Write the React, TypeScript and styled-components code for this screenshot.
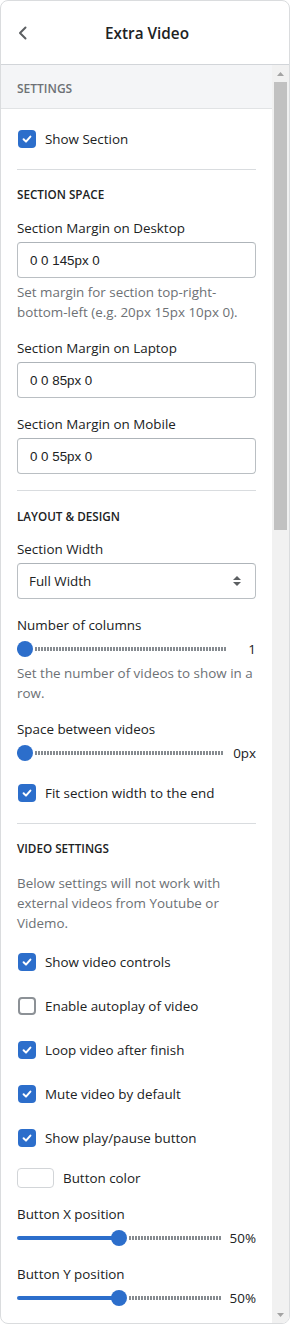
import React from 'react';
import styled, { createGlobalStyle } from 'styled-components';

const GlobalStyle = createGlobalStyle`
  html, body { margin: 0; padding: 0; background: #ffffff; }
  body { font-family: "Open Sans", "Noto Sans", sans-serif; color: #202223; }
  * { box-sizing: border-box; }
`;

const TEXT = '13.4px';

const Card = styled.div`
  width: 290px;
  height: 1324px;
  border: 1px solid #dadcde;
  border-radius: 8px;
  overflow: hidden;
  display: flex;
  flex-direction: column;
  background: #ffffff;
`;

const Header = styled.header`
  flex: none;
  height: 64px;
  border-bottom: 1px solid #d2d5d9;
  display: grid;
  grid-template-columns: 44px 1fr 40px;
  align-items: center;
`;

const BackButton = styled.button`
  border: 0;
  background: transparent;
  padding: 0;
  width: 44px;
  height: 44px;
  display: flex;
  align-items: center;
  justify-content: center;
  color: #5c5f62;
`;

const Title = styled.h1`
  margin: 0;
  text-align: center;
  font-size: 15.3px;
  font-weight: 600;
  line-height: 20px;
  color: #202223;
`;

const Body = styled.div`
  flex: 1;
  min-height: 0;
  display: flex;
`;

const Content = styled.div`
  width: 271px;
  flex: none;
  overflow: hidden;
`;

const Band = styled.div`
  height: 44px;
  padding: 3px 16px 0;
  display: flex;
  align-items: center;
  background: #f4f5f7;
  border-bottom: 1px solid #e1e3e5;
  font-size: 12px;
  font-weight: 600;
  color: #6d7175;
  text-transform: uppercase;
`;

const Section = styled.section<{ $pt: number; $pb: number; $last?: boolean }>`
  margin: 0 16px;
  padding: ${(p) => p.$pt}px 0 ${(p) => p.$pb}px;
  border-bottom: ${(p) => (p.$last ? 'none' : '1px solid #d9dcdf')};
  display: flex;
  flex-direction: column;
`;

const Heading = styled.h2`
  margin: 0;
  font-size: 11.7px;
  line-height: 16px;
  font-weight: 600;
  text-transform: uppercase;
  color: #202223;
`;

const Field = styled.div<{ $mt?: number }>`
  margin-top: ${(p) => p.$mt ?? 0}px;
  display: flex;
  flex-direction: column;
  gap: 4px;
`;

const Label = styled.label`
  font-size: ${TEXT};
  line-height: 20px;
  color: #202223;
`;

const Help = styled.p<{ $mt?: number }>`
  margin: ${(p) => p.$mt ?? 0}px 0 0;
  font-size: ${TEXT};
  line-height: 20px;
  color: #6d7175;
`;

const TextInput = styled.input`
  height: 36px;
  width: 100%;
  border: 1px solid #babfc3;
  border-top-color: #aeb4b9;
  border-radius: 4px;
  padding: 0 12px;
  font-family: "Liberation Sans", Arial, sans-serif;
  font-size: 13.333px;
  color: #202223;
  background: #ffffff;
  outline: none;
`;

const SelectBox = styled.div`
  height: 36px;
  border: 1px solid #babfc3;
  border-top-color: #aeb4b9;
  border-radius: 4px;
  padding: 0 12px 0 11px;
  display: flex;
  align-items: center;
  justify-content: space-between;
  font-size: ${TEXT};
  color: #202223;
`;

const SliderRow = styled.div`
  height: 20px;
  display: flex;
  align-items: center;
  gap: 9px;
`;

const Track = styled.div`
  position: relative;
  flex: 1;
  height: 20px;
`;

const Dotted = styled.div`
  position: absolute;
  right: 0;
  top: 8px;
  height: 4px;
  background: repeating-linear-gradient(to right, #868b90 0 2px, transparent 2px 3px);
`;

const Filled = styled.div`
  position: absolute;
  left: 0;
  top: 8px;
  height: 4px;
  border-radius: 2px;
  background: #2c6ecb;
`;

const Thumb = styled.div`
  position: absolute;
  top: 2px;
  width: 16px;
  height: 16px;
  border-radius: 50%;
  background: #2c6ecb;
`;

const Value = styled.span`
  min-width: 20px;
  text-align: right;
  font-size: ${TEXT};
  line-height: 20px;
  color: #202223;
`;

const CheckRow = styled.label<{ $mt?: number }>`
  margin-top: ${(p) => p.$mt ?? 0}px;
  height: 20px;
  display: flex;
  align-items: center;
  gap: 8px;
  font-size: ${TEXT};
  line-height: 20px;
  color: #202223;
`;

const Box = styled.span<{ $checked: boolean }>`
  width: 18px;
  height: 18px;
  margin: 1px;
  border-radius: 4px;
  flex: none;
  display: flex;
  align-items: center;
  justify-content: center;
  background: ${(p) => (p.$checked ? '#2c6ecb' : '#ffffff')};
  border: ${(p) => (p.$checked ? 'none' : '2px solid #8c9196')};
`;

const ColorRow = styled.div<{ $mt?: number }>`
  margin-top: ${(p) => p.$mt ?? 0}px;
  height: 20px;
  display: flex;
  align-items: center;
  gap: 9px;
  font-size: ${TEXT};
  line-height: 20px;
`;

const Swatch = styled.span`
  width: 37px;
  height: 20px;
  border: 1px solid #d2d5d8;
  border-radius: 4px;
  background: #ffffff;
`;

const Scrollbar = styled.div`
  width: 17px;
  flex: none;
  background: #f1f1f1;
  display: flex;
  flex-direction: column;
`;

const ScrollButton = styled.div`
  height: 17px;
  flex: none;
  display: flex;
  align-items: center;
  justify-content: center;
`;

const ScrollThumb = styled.div`
  height: 448px;
  margin: 0 2px;
  background: #c1c1c1;
  flex: none;
`;

const ScrollSpace = styled.div`
  flex: 1;
`;

const Check = ({ checked, label, mt }: { checked: boolean; label: string; mt?: number }) => (
  <CheckRow $mt={mt}>
    <Box $checked={checked}>
      {checked && (
        <svg width="12" height="12" viewBox="0 0 12 12">
          <path d="M2.6 6.3 L5 8.6 L9.4 3.6" fill="none" stroke="#fff" strokeWidth="2" strokeLinecap="round" strokeLinejoin="round" />
        </svg>
      )}
    </Box>
    <span>{label}</span>
  </CheckRow>
);

const Slider = ({ fraction, value }: { fraction: number; value: string }) => (
  <SliderRow>
    <Track>
      <Filled style={{ width: `calc(8px + (100% - 16px) * ${fraction})` }} />
      <Dotted style={{ left: `calc(18px + (100% - 16px) * ${fraction})` }} />
      <Thumb style={{ left: `calc((100% - 16px) * ${fraction})` }} />
    </Track>
    <Value>{value}</Value>
  </SliderRow>
);

const Input = ({ label, value, mt }: { label: string; value: string; mt?: number }) => (
  <Field $mt={mt}>
    <Label>{label}</Label>
    <TextInput readOnly value={value} />
  </Field>
);

export default function App() {
  return (
    <>
      <GlobalStyle />
      <Card>
        <Header>
          <BackButton aria-label="Back">
            <svg width="20" height="20" viewBox="0 0 20 20">
              <path d="M12.5 4.5 L7 10 L12.5 15.5" fill="none" stroke="#5c5f62" strokeWidth="2" strokeLinecap="round" strokeLinejoin="round" />
            </svg>
          </BackButton>
          <Title>Extra Video</Title>
          <span />
        </Header>
        <Body>
          <Content>
            <Band>Settings</Band>
            <Section $pt={20} $pb={20}>
              <Check checked label="Show Section" />
            </Section>
            <Section $pt={16} $pb={16}>
              <Heading>Section space</Heading>
              <Field $mt={16}>
                <Label>Section Margin on Desktop</Label>
                <TextInput readOnly value="0 0 145px 0" />
                <Help>Set margin for section top-right-bottom-left (e.g. 20px 15px 10px 0).</Help>
              </Field>
              <Input mt={16} label="Section Margin on Laptop" value="0 0 85px 0" />
              <Input mt={16} label="Section Margin on Mobile" value="0 0 55px 0" />
            </Section>
            <Section $pt={17} $pb={20}>
              <Heading>Layout &amp; Design</Heading>
              <Field $mt={15}>
                <Label>Section Width</Label>
                <SelectBox>
                  <span>Full Width</span>
                  <svg width="12" height="16" viewBox="0 0 12 16">
                    <path d="M6 3 L10 7 H2 Z M6 13 L2 9 H10 Z" fill="#5c5f62" />
                  </svg>
                </SelectBox>
              </Field>
              <Field $mt={16}>
                <Label>Number of columns</Label>
                <Slider fraction={0} value="1" />
                <Help>Set the number of videos to show in a row.</Help>
              </Field>
              <Field $mt={16}>
                <Label>Space between videos</Label>
                <Slider fraction={0} value="0px" />
              </Field>
              <Check mt={20} checked label="Fit section width to the end" />
            </Section>
            <Section $pt={16} $pb={20} $last>
              <Heading>Video settings</Heading>
              <Help $mt={17}>Below settings will not work with external videos from Youtube or Videmo.</Help>
              <Check mt={19} checked label="Show video controls" />
              <Check mt={24} checked={false} label="Enable autoplay of video" />
              <Check mt={24} checked label="Loop video after finish" />
              <Check mt={24} checked label="Mute video by default" />
              <Check mt={24} checked label="Show play/pause button" />
              <ColorRow $mt={20}>
                <Swatch />
                <span>Button color</span>
              </ColorRow>
              <Field $mt={16}>
                <Label>Button X position</Label>
                <Slider fraction={0.5} value="50%" />
              </Field>
              <Field $mt={16}>
                <Label>Button Y position</Label>
                <Slider fraction={0.5} value="50%" />
              </Field>
            </Section>
          </Content>
          <Scrollbar>
            <ScrollButton>
              <svg width="7" height="4" viewBox="0 0 7 4">
                <path d="M3.5 0 L7 4 H0 Z" fill="#a3a3a3" />
              </svg>
            </ScrollButton>
            <ScrollThumb />
            <ScrollSpace />
            <ScrollButton>
              <svg width="7" height="4" viewBox="0 0 7 4">
                <path d="M0 0 H7 L3.5 4 Z" fill="#a3a3a3" />
              </svg>
            </ScrollButton>
          </Scrollbar>
        </Body>
      </Card>
    </>
  );
}
